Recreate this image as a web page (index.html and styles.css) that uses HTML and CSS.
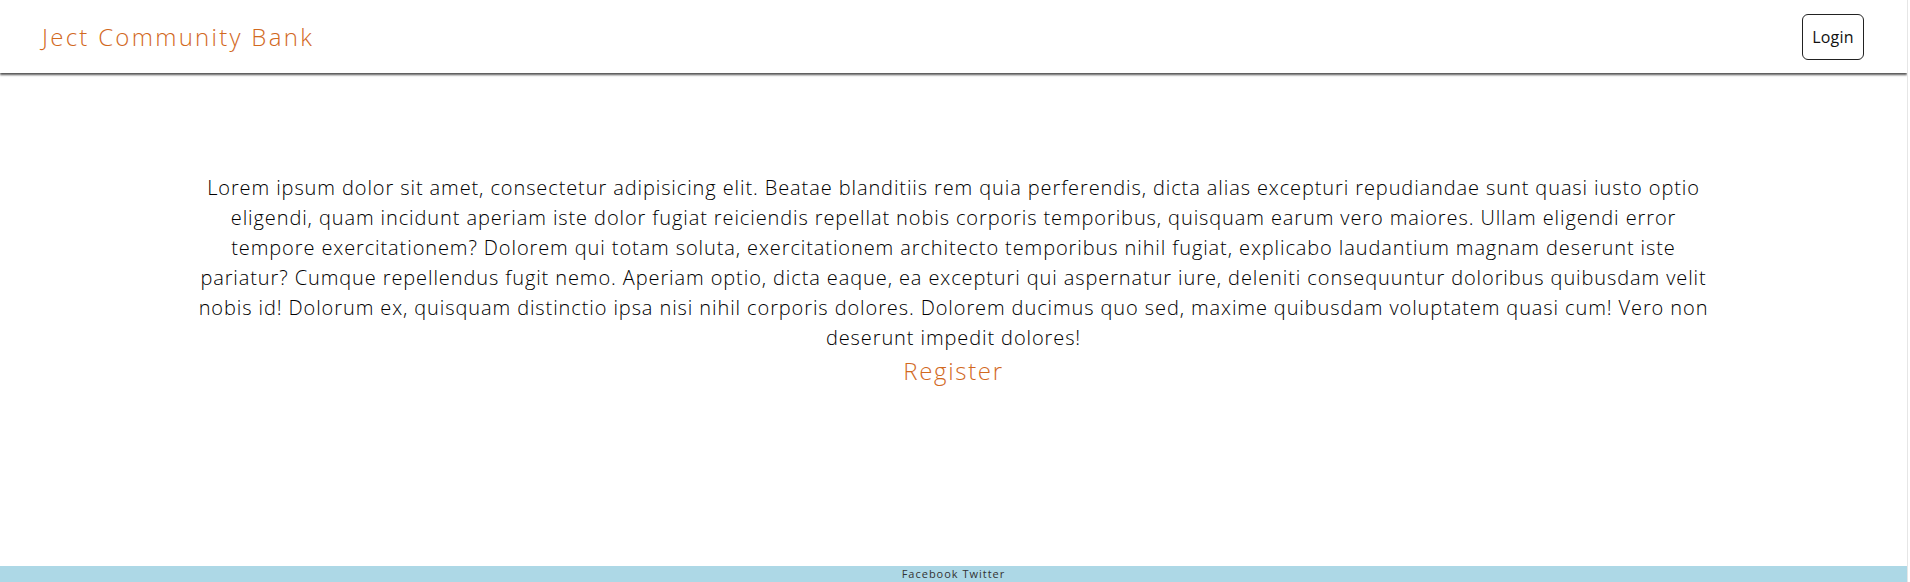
FILE: index.html
```html
<!DOCTYPE html>
<html lang="en">
<head>
<meta charset="utf-8">
<title>Ject Community Bank</title>
<link rel="stylesheet" href="styles.css">
</head>
<body>
<header class="site-header">
  <a class="brand" href="#">Ject Community Bank</a>
  <button class="login-btn" type="button">Login</button>
</header>
<main class="hero">
  <p class="hero-text">Lorem ipsum dolor sit amet, consectetur adipisicing elit. Beatae blanditiis rem quia perferendis, dicta alias excepturi repudiandae sunt quasi iusto optio eligendi, quam incidunt aperiam iste dolor fugiat reiciendis repellat nobis corporis temporibus, quisquam earum vero maiores. Ullam eligendi error tempore exercitationem? Dolorem qui totam soluta, exercitationem architecto temporibus nihil fugiat, explicabo laudantium magnam deserunt iste pariatur? Cumque repellendus fugit nemo. Aperiam optio, dicta eaque, ea excepturi qui aspernatur iure, deleniti consequuntur doloribus quibusdam velit nobis id! Dolorum ex, quisquam distinctio ipsa nisi nihil corporis dolores. Dolorem ducimus quo sed, maxime quibusdam voluptatem quasi cum! Vero non deserunt impedit dolores!</p>
  <a class="register" href="#">Register</a>
</main>
<footer class="site-footer">
  <span>Facebook</span> <span>Twitter</span>
</footer>
</body>
</html>
```
FILE: styles.css
```css
html {
  background: #ffffff;
  height: 100%;
}
body {
  margin: 0 2px 0 0;
  border-right: 1px solid #e6e6e6;
  min-height: 100%;
  display: flex;
  flex-direction: column;
  font-family: "Open Sans", "Liberation Sans", sans-serif;
  color: #222;
  background: #ffffff;
}
.site-header {
  height: 73px;
  box-sizing: border-box;
  padding: 0 43px 0 42px;
  display: flex;
  align-items: center;
  justify-content: space-between;
  background: #fff;
  box-shadow: 0 2px 2px #555;
  position: relative;
  z-index: 1;
}
.brand {
  color: #d2691e;
  text-decoration: none;
  font-size: 24px;
  font-weight: 300;
  letter-spacing: 0.095em;
}
.login-btn {
  width: 62px;
  height: 46px;
  border: 1px solid #222;
  border-radius: 6px;
  background: #fff;
  font-family: inherit;
  font-size: 16px;
  color: #111;
  padding: 0;
  letter-spacing: 0.01em;
}
.hero {
  width: 80%;
  margin: 0 auto;
  padding-top: 100px;
  text-align: center;
  display: flex;
  flex-direction: column;
  align-items: center;
}
.hero-text {
  margin: 0;
  font-size: 20px;
  line-height: 30px;
  font-weight: 300;
  color: #000;
  letter-spacing: 0.045em;
}
.register {
  color: #d2691e;
  text-decoration: none;
  font-size: 24px;
  line-height: 36px;
  font-weight: 300;
  letter-spacing: 0.07em;
}
.site-footer {
  margin-top: auto;
  height: 16px;
  background: #add8e6;
  text-align: center;
  font-size: 11px;
  line-height: 16px;
  color: #333;
  letter-spacing: 0.09em;
}
```
